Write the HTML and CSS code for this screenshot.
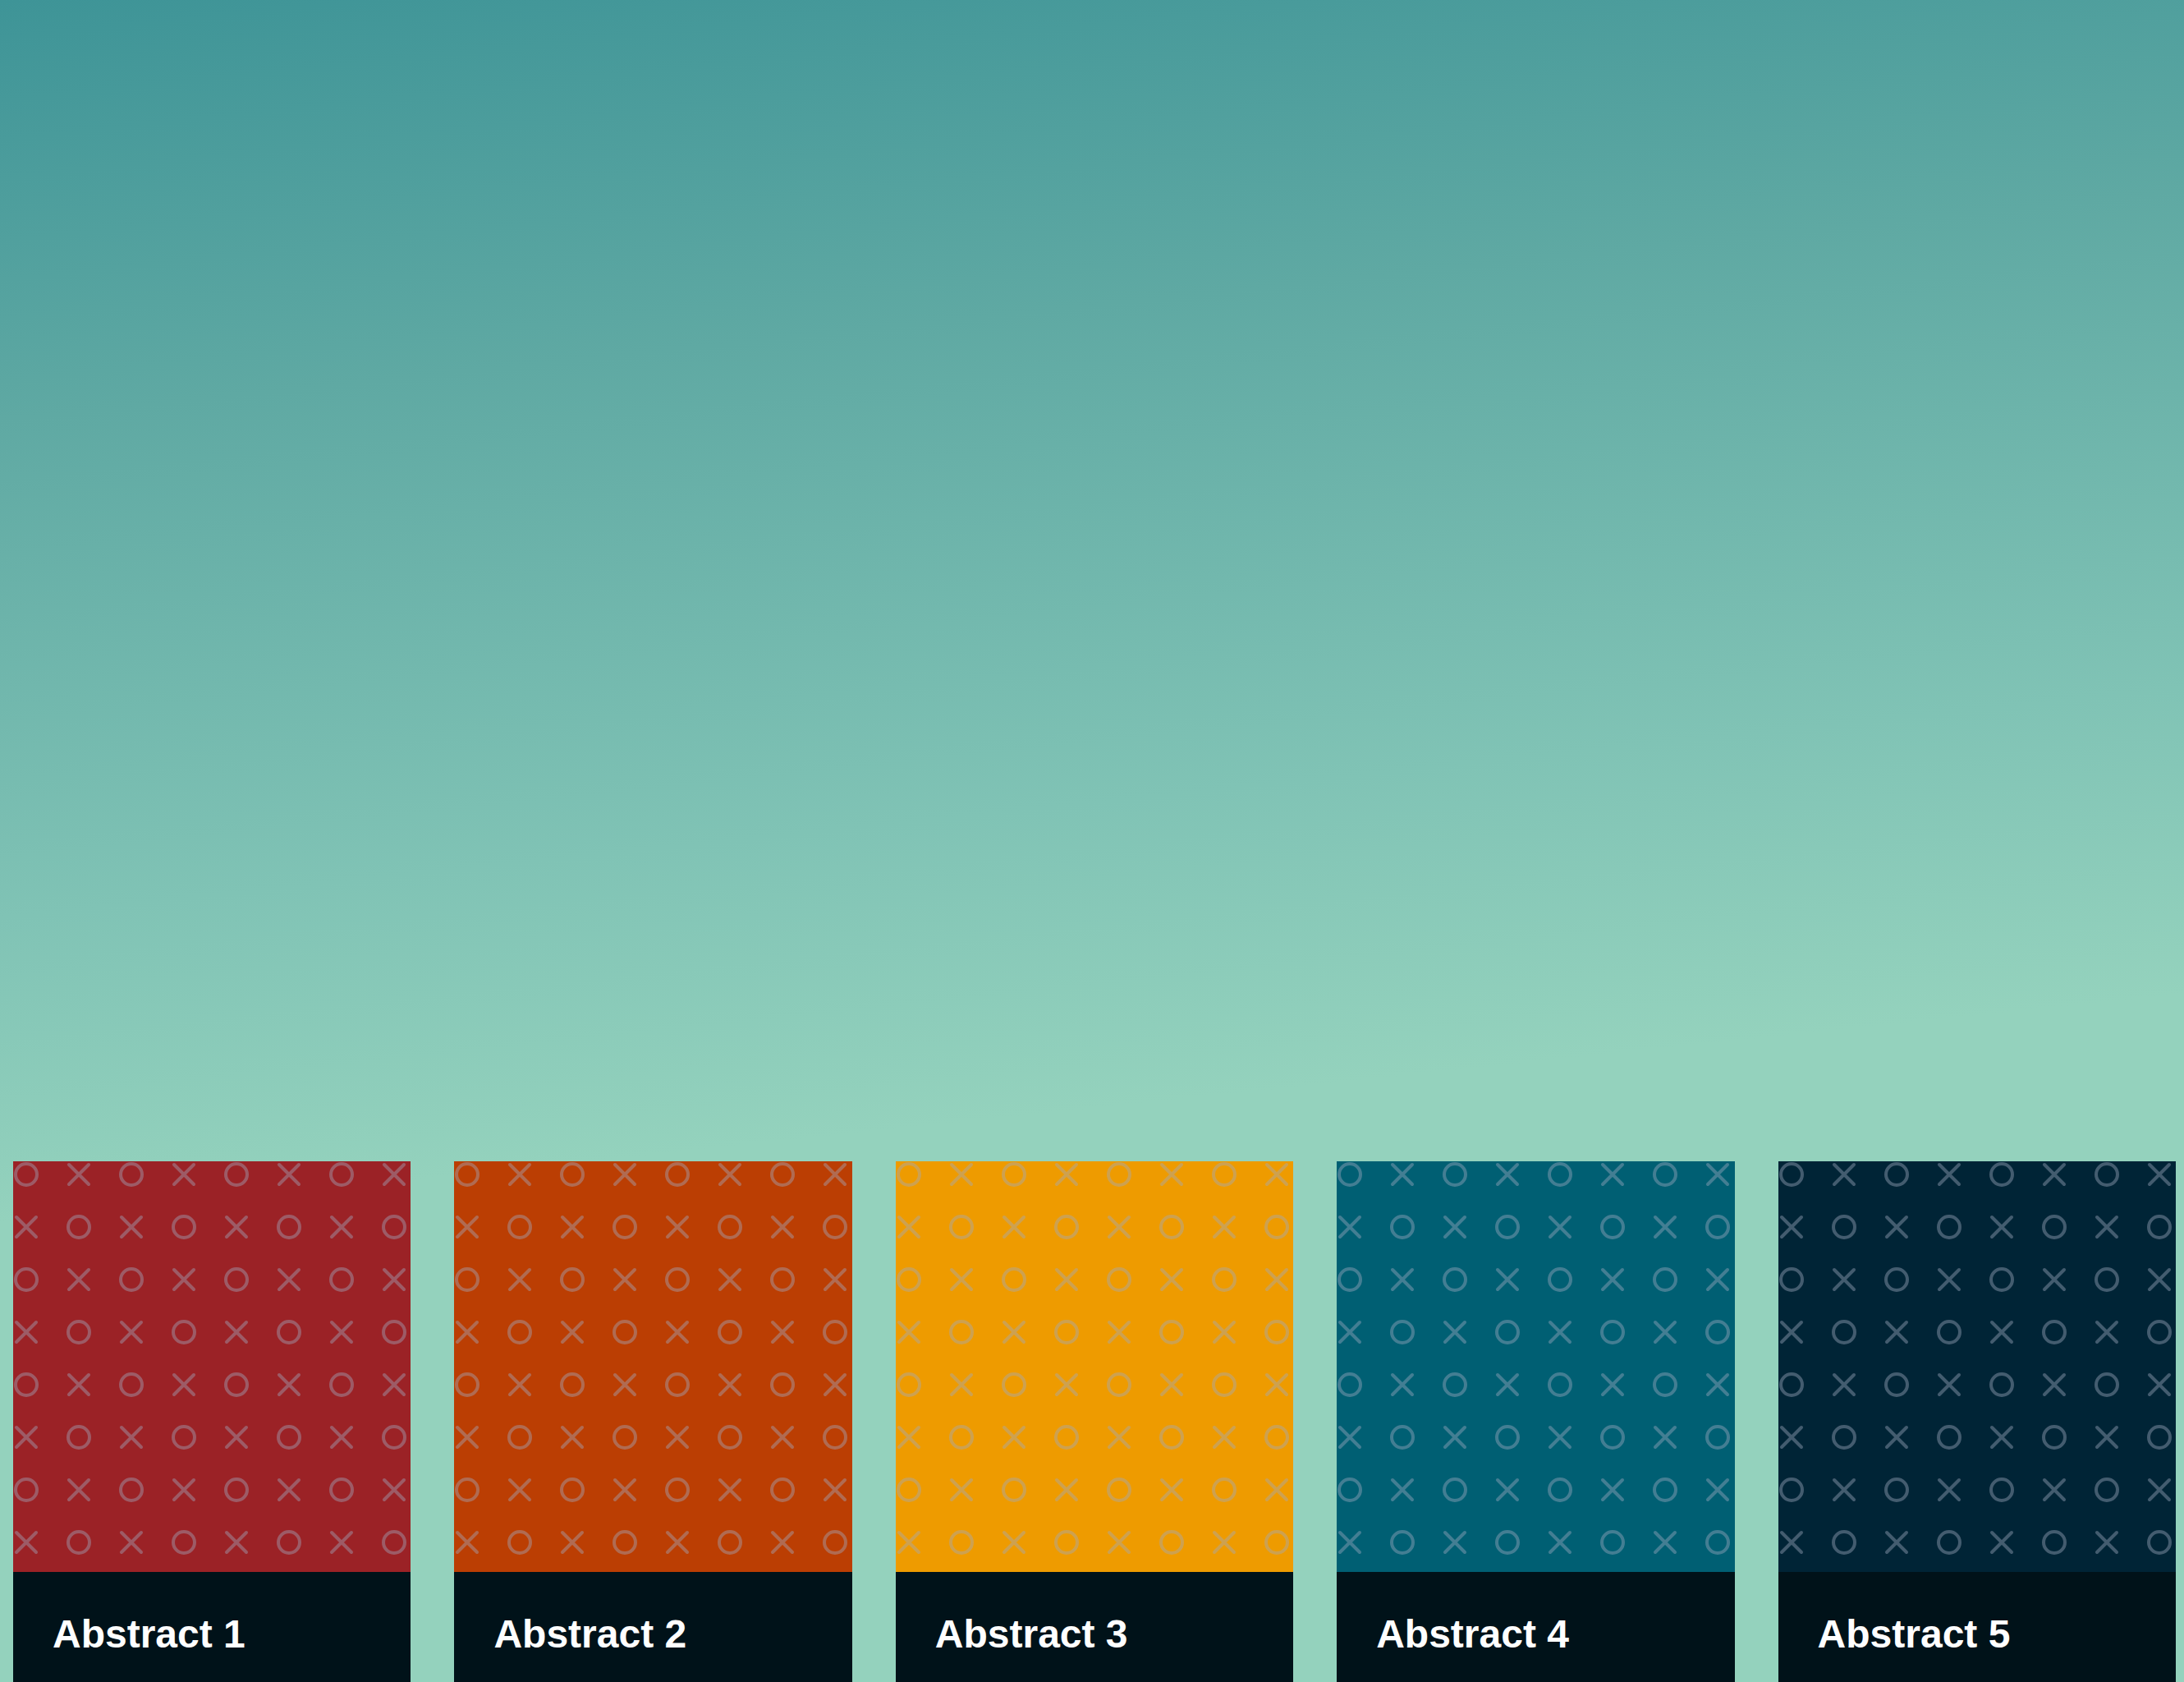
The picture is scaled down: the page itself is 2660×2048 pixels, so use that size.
FILE: index.html
```html
<!DOCTYPE html>
<html lang="en">
<head>
<meta charset="utf-8">
<title>Abstract Gallery</title>
<link rel="stylesheet" href="styles.css">
</head>
<body>
<svg class="defs" width="0" height="0" aria-hidden="true">
  <defs>
    <pattern id="xo" width="128" height="128" patternUnits="userSpaceOnUse">
      <g fill="none" stroke="rgba(160,170,190,0.42)" stroke-width="4" stroke-linecap="round">
        <circle cx="16" cy="16" r="13"/>
        <path d="M68 4 L92 28 M92 4 L68 28"/>
        <path d="M4 68 L28 92 M28 68 L4 92"/>
        <circle cx="80" cy="80" r="13"/>
      </g>
    </pattern>
  </defs>
</svg>
<div class="page">
  <header class="hero"></header>
  <section class="gallery">
    <article class="card">
      <div class="art art-1"><svg class="pattern" width="100%" height="100%"><rect width="100%" height="100%" fill="url(#xo)"/></svg></div>
      <div class="label">Abstract 1</div>
    </article>
    <article class="card">
      <div class="art art-2"><svg class="pattern" width="100%" height="100%"><rect width="100%" height="100%" fill="url(#xo)"/></svg></div>
      <div class="label">Abstract 2</div>
    </article>
    <article class="card">
      <div class="art art-3"><svg class="pattern" width="100%" height="100%"><rect width="100%" height="100%" fill="url(#xo)"/></svg></div>
      <div class="label">Abstract 3</div>
    </article>
    <article class="card">
      <div class="art art-4"><svg class="pattern" width="100%" height="100%"><rect width="100%" height="100%" fill="url(#xo)"/></svg></div>
      <div class="label">Abstract 4</div>
    </article>
    <article class="card">
      <div class="art art-5"><svg class="pattern" width="100%" height="100%"><rect width="100%" height="100%" fill="url(#xo)"/></svg></div>
      <div class="label">Abstract 5</div>
    </article>
  </section>
</div>
</body>
</html>
```
FILE: styles.css
```css
html, body {
  margin: 0;
  padding: 0;
}

body {
  height: 2048px;
  overflow: hidden;
  font-family: "Liberation Sans", Arial, sans-serif;
  background: linear-gradient(174deg, #3e9497 0%, #5fa9a3 22%, #80c3b5 48%, #94d2bd 64%, #94d2bd 100%);
}

.defs {
  position: absolute;
  width: 0;
  height: 0;
  overflow: hidden;
}

.page {
  display: flex;
  flex-direction: column;
  height: 100%;
}

.hero {
  height: 1414px;
  flex: none;
}

.gallery {
  display: grid;
  grid-template-columns: repeat(5, 1fr);
  column-gap: 53px;
  padding: 0 10px 0 16px;
}

.card {
  display: flex;
  flex-direction: column;
}

.art {
  height: 500px;
}

.pattern {
  display: block;
}

.art-1 { background: #9b2226; }
.art-2 { background: #bb3e03; }
.art-3 { background: #ee9b00; }
.art-4 { background: #005f73; }
.art-5 { background: #002436; }

.label {
  background: #001219;
  color: #ffffff;
  font-size: 48px;
  font-weight: 700;
  line-height: 55px;
  padding: 48px;
}
```
